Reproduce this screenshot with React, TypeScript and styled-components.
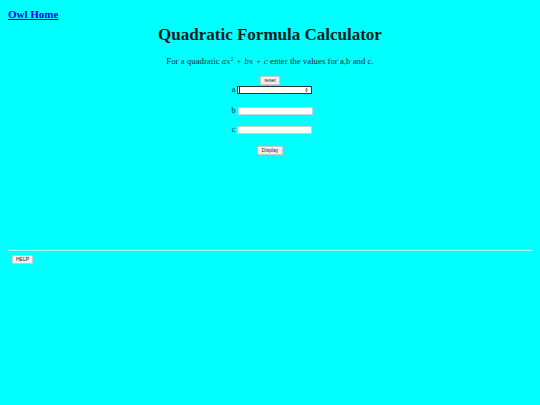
import React from "react";
import styled, { createGlobalStyle } from "styled-components";

const Global = createGlobalStyle`
  html, body { background: #00ffff; }
  body {
    margin: 8px;
    font-family: "Liberation Serif", "Times New Roman", serif;
    color: #0b1a1a;
  }
`;

const Page = styled.div`
  display: flex;
  flex-direction: column;
`;

const HomeLink = styled.a`
  font-size: 11px;
  font-weight: bold;
  color: #0000ee;
  text-decoration: underline;
  line-height: 12px;
  align-self: flex-start;
`;

const Title = styled.h1`
  font-size: 17px;
  font-weight: bold;
  text-align: center;
  margin: 4px 0 0;
  line-height: 22px;
`;

const Intro = styled.p`
  font-size: 8.8px;
  text-align: center;
  margin: 6px 0 0;
  line-height: 12px;
  color: #123030;
`;

const MathI = styled.span`
  font-style: italic;
  font-family: "DejaVu Serif", "Liberation Serif", serif;
  font-size: 7.5px;
  color: #2a4a4a;
`;

const Op = styled.span`
  margin: 0 3px;
  font-size: 8px;
  color: #2a4a4a;
`;

const Sup = styled.sup`
  font-size: 5px;
  font-style: normal;
`;

const Form = styled.div`
  display: flex;
  flex-direction: column;
  align-items: center;
  margin-top: 8px;
`;

const SmallButton = styled.button`
  font-family: "Liberation Sans", Arial, sans-serif;
  font-size: 5px;
  line-height: 7px;
  height: 9px;
  padding: 0 3px;
  background: #efefef;
  border: 1px solid #c8c8c8;
  border-radius: 1px;
  color: #222;
  cursor: pointer;
`;

const Row = styled.label<{ $top: number }>`
  display: flex;
  align-items: center;
  gap: 2px;
  margin-top: ${(p) => p.$top}px;
  margin-left: 4px;
  font-size: 8px;
  line-height: 8px;
  color: #123030;
`;

const FieldBox = styled.span<{ $focused?: boolean }>`
  position: relative;
  display: inline-flex;
  width: 75px;
  height: 8px;
  box-sizing: border-box;
  background: #fff;
  border: 1px solid ${(p) => (p.$focused ? "#1d3a3a" : "#b9d6d6")};
`;

const Field = styled.input`
  width: 100%;
  height: 100%;
  border: none;
  padding: 0 0 0 1px;
  margin: 0;
  outline: none;
  background: transparent;
  font-size: 6px;
`;

const Caret = styled.span`
  position: absolute;
  left: 1px;
  top: 0;
  bottom: 0;
  width: 1px;
  background: #333;
`;

const Spinner = styled.svg`
  position: absolute;
  right: 3px;
  top: 1px;
`;

const DisplayWrap = styled.div`
  margin-top: 4px;
`;

const DisplayButton = styled(SmallButton)`
  padding: 0 4px;
`;

const Footer = styled.div`
  margin-top: 93px;
  display: flex;
  flex-direction: column;
  align-items: flex-start;
`;

const Rule = styled.div`
  align-self: stretch;
  height: 0;
  margin: 0 -4px;
  border-top: 1px solid #3ff0f0;
  border-bottom: 1px solid #a8ffff;
`;

const HelpButton = styled(SmallButton)`
  margin: 4px 0 0 4px;
`;

export default function App() {
  return (
    <Page>
      <Global />
      <HomeLink href="#">Owl Home</HomeLink>
      <Title>Quadratic Formula Calculator</Title>
      <Intro>
        For a quadratic{" "}
        <MathI>
          ax<Sup>2</Sup>
        </MathI>
        <Op>+</Op>
        <MathI>bx</MathI>
        <Op>+</Op>
        <MathI>c</MathI> enter the values for a,b and c.
      </Intro>
      <Form>
        <SmallButton>reset</SmallButton>
        <Row $top={1}>
          a
          <FieldBox $focused>
            <Field type="text" />
            <Caret />
            <Spinner width="3" height="4" viewBox="0 0 3 4">
              <path d="M0 1.6 L1.5 0 L3 1.6 Z M0 2.4 L1.5 4 L3 2.4 Z" fill="#444" />
            </Spinner>
          </FieldBox>
        </Row>
        <Row $top={13}>
          b
          <FieldBox>
            <Field type="text" />
          </FieldBox>
        </Row>
        <Row $top={11}>
          c
          <FieldBox>
            <Field type="text" />
          </FieldBox>
        </Row>
        <DisplayWrap>
          <DisplayButton>Display</DisplayButton>
        </DisplayWrap>
      </Form>
      <Footer>
        <Rule />
        <HelpButton>HELP</HelpButton>
      </Footer>
    </Page>
  );
}
